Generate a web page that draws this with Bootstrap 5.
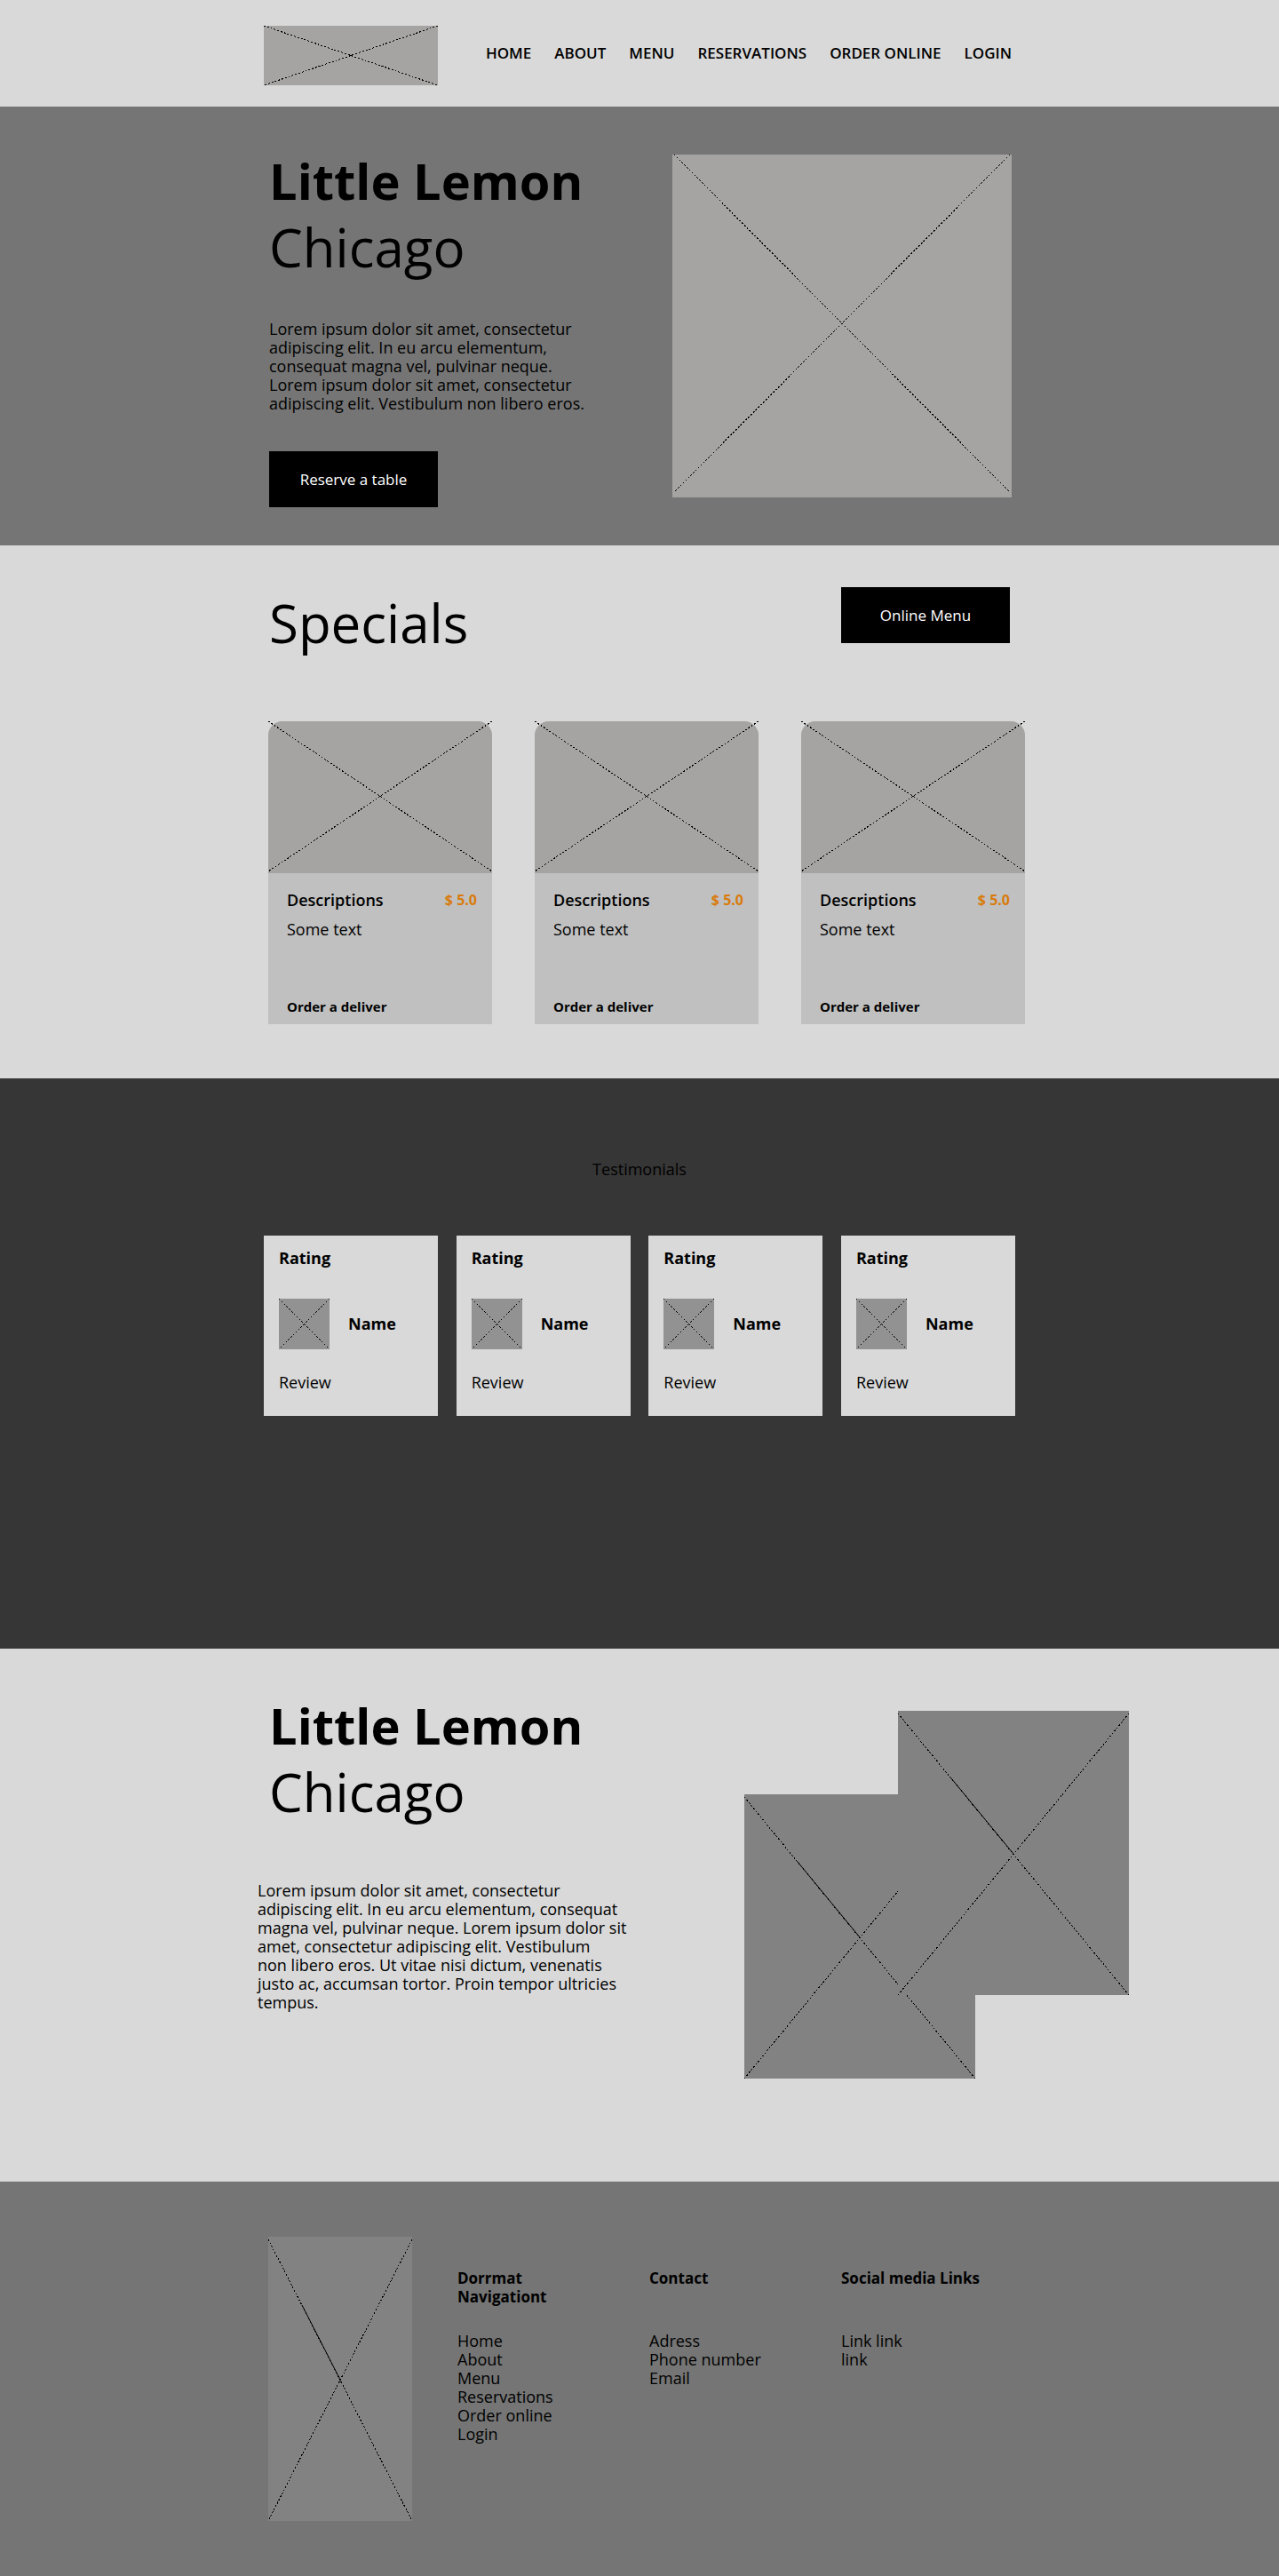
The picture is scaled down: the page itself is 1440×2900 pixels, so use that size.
<!DOCTYPE html>
<html lang="en">
<head>
<meta charset="utf-8">
<meta name="viewport" content="width=device-width, initial-scale=1">
<title>Little Lemon</title>
<link href="https://cdn.jsdelivr.net/npm/bootstrap@5.3.0/dist/css/bootstrap.min.css" rel="stylesheet">
<style>
  body { font-family: "Open Sans", "Noto Sans", sans-serif; font-size: 18px; line-height: 21px; color: #000; background: #757575; }
  a { color: #000; text-decoration: none; }
  a:hover { text-decoration: underline; }
  h1, h2, h3, p, ul { margin: 0; }
  .wrap { max-width: 846px; margin: 0 auto; }
  .band-light { background: #d9d9d9; }
  .band-mid { background: #757575; }
  .band-dark { background: #363636; }

  /* picture placeholders */
  .ph { display: block; width: 100%; overflow: visible; }
  .ph line { stroke: #000; stroke-width: 1; stroke-dasharray: 2 2; shape-rendering: crispEdges; }
  .ph .ph-solid { stroke-dasharray: none; shape-rendering: auto; }
  .ph-warm { background: #a5a4a2; }
  .ph-gray { background: #828282; }
  .ph-thumb { background: #929292; width: 57px; height: 57px; }

  .site-head { padding: 29px 0 24px; }
  .logo-box { width: 196px; }
  .main-nav { column-gap: 26px; padding: 20px 4px 0 0; font-size: 17px; font-weight: 600; }

  .display-title { font-size: 56px; line-height: 75px; font-weight: 700; }
  .display-sub { font-size: 60px; line-height: 75px; font-weight: 400; }
  .btn-block { width: 190px; height: 63px; background: #000; color: #fff; border: 0; font-size: 17px; }
  .btn-block:hover { background: #222; color: #fff; }

  .hero { padding: 46px 0 43px; }
  .hero-copy { padding-left: 6px; }
  .hero-copy p { margin: 44px 0 43px; }
  .hero-pic { width: 382px; margin: 8px 4px 0 0; }

  .specials { padding: 47px 0 61px; }
  .specials-head { padding: 0 6px; margin-bottom: 73px; }
  .specials-head h2 { padding-top: 3px; }
  .dish-row { gap: 48px; margin: 0 -11px 0 5px; }
  .dish { width: 252px; background: #c0c0c0; border-radius: 16px 16px 0 0; }
  .dish .ph { border-radius: 16px 16px 0 0; }
  .dish-body { padding: 20px 17px 9px 21px; height: 170px; }
  .dish-body p { margin-top: 12px; }
  .dish-price { color: #d87b0c; font-weight: 700; font-size: 16px; }
  .dish-name { font-size: 18px; line-height: 21px; font-weight: 600; }
  .dish-link { font-size: 15px; font-weight: 700; }

  .testimonials { padding: 92px 0 262px; }
  .testimonials h2 { font-size: 18px; line-height: 21px; font-weight: 400; margin-bottom: 64px; }
  .quote { width: 196px; height: 203px; background: #d9d9d9; padding: 15px 17px; }
  .quote h3 { font-size: 18px; line-height: 21px; font-weight: 700; }
  .quote-who { gap: 21px; margin: 35px 0 27px; }

  .about { padding: 49px 0 116px; }
  .about-wrap { max-width: 1102px; margin: 0 auto; padding-left: 121px; }
  .about-copy h2, .about-copy .display-sub { padding-left: 13px; }
  .about-copy p { margin-top: 63px; }
  .about-pics { width: 433px; height: 414px; margin-top: 21px; position: relative; }
  .about-pics .ph { position: absolute; width: 260px; }
  .pic-back { left: 0; bottom: 0; }
  .pic-front { right: 0; top: 0; }

  .site-foot { padding: 62px 0; }
  .foot-pic { width: 162px; margin: 0 51px 0 5px; }
  .foot-col { width: 216px; padding-top: 36px; }
  .foot-col:last-child { width: 196px; }
  .foot-col h3 { font-size: 17px; line-height: 21px; font-weight: 700; min-height: 42px; margin-bottom: 29px; }
</style>
</head>
<body>
<header class="band-light">
  <div class="wrap site-head d-flex flex-wrap align-items-start justify-content-between">
    <a href="#" class="logo-box" aria-label="Little Lemon home"><svg class="ph ph-warm" viewBox="0 0 196 67"><line x2="196" y2="67"/><line x1="196" x2="0" y2="67"/></svg></a>
    <nav class="main-nav d-flex flex-wrap">
      <a href="#">HOME</a><a href="#">ABOUT</a><a href="#">MENU</a><a href="#">RESERVATIONS</a><a href="#">ORDER ONLINE</a><a href="#">LOGIN</a>
    </nav>
  </div>
</header>
<main>
  <section class="band-mid hero">
    <div class="wrap d-flex flex-wrap justify-content-between align-items-start">
      <div class="hero-copy">
        <h1 class="display-title">Little Lemon</h1>
        <div class="display-sub">Chicago</div>
        <p>Lorem ipsum dolor sit amet, consectetur<br>adipiscing elit. In eu arcu elementum,<br>consequat magna vel, pulvinar neque.<br>Lorem ipsum dolor sit amet, consectetur<br>adipiscing elit. Vestibulum non libero eros.</p>
        <button type="button" class="btn btn-block rounded-0">Reserve a table</button>
      </div>
      <div class="hero-pic"><svg class="ph ph-warm" viewBox="0 0 382 386"><line x1="2" y1="0" x2="380" y2="380"/><line x1="380" y1="0" x2="2" y2="380"/></svg></div>
    </div>
  </section>

  <section class="band-light specials">
    <div class="wrap">
      <div class="specials-head d-flex flex-wrap justify-content-between align-items-start">
        <h2 class="display-sub">Specials</h2>
        <button type="button" class="btn btn-block rounded-0">Online Menu</button>
      </div>
      <div class="dish-row d-flex flex-wrap">
        <article class="dish">
          <svg class="ph ph-warm" viewBox="0 0 252 171"><line x2="252" y2="169"/><line x1="252" x2="0" y2="169"/></svg>
          <div class="dish-body d-flex flex-column">
            <div class="d-flex justify-content-between align-items-end"><h3 class="dish-name">Descriptions</h3><span class="dish-price">$ 5.0</span></div>
            <p>Some text</p>
            <a href="#" class="dish-link mt-auto">Order a deliver</a>
          </div>
        </article>
        <article class="dish">
          <svg class="ph ph-warm" viewBox="0 0 252 171"><line x2="252" y2="169"/><line x1="252" x2="0" y2="169"/></svg>
          <div class="dish-body d-flex flex-column">
            <div class="d-flex justify-content-between align-items-end"><h3 class="dish-name">Descriptions</h3><span class="dish-price">$ 5.0</span></div>
            <p>Some text</p>
            <a href="#" class="dish-link mt-auto">Order a deliver</a>
          </div>
        </article>
        <article class="dish">
          <svg class="ph ph-warm" viewBox="0 0 252 171"><line x2="252" y2="169"/><line x1="252" x2="0" y2="169"/></svg>
          <div class="dish-body d-flex flex-column">
            <div class="d-flex justify-content-between align-items-end"><h3 class="dish-name">Descriptions</h3><span class="dish-price">$ 5.0</span></div>
            <p>Some text</p>
            <a href="#" class="dish-link mt-auto">Order a deliver</a>
          </div>
        </article>
      </div>
    </div>
  </section>

  <section class="band-dark testimonials">
    <div class="wrap">
      <h2 class="text-center">Testimonials</h2>
      <div class="d-flex flex-wrap justify-content-between">
        <article class="quote"><h3>Rating</h3><div class="d-flex align-items-center quote-who"><svg class="ph ph-thumb" viewBox="0 0 57 57"><line x2="57" y2="57"/><line x1="57" x2="0" y2="57"/></svg><strong>Name</strong></div><p>Review</p></article>
        <article class="quote"><h3>Rating</h3><div class="d-flex align-items-center quote-who"><svg class="ph ph-thumb" viewBox="0 0 57 57"><line x2="57" y2="57"/><line x1="57" x2="0" y2="57"/></svg><strong>Name</strong></div><p>Review</p></article>
        <article class="quote"><h3>Rating</h3><div class="d-flex align-items-center quote-who"><svg class="ph ph-thumb" viewBox="0 0 57 57"><line x2="57" y2="57"/><line x1="57" x2="0" y2="57"/></svg><strong>Name</strong></div><p>Review</p></article>
        <article class="quote"><h3>Rating</h3><div class="d-flex align-items-center quote-who"><svg class="ph ph-thumb" viewBox="0 0 57 57"><line x2="57" y2="57"/><line x1="57" x2="0" y2="57"/></svg><strong>Name</strong></div><p>Review</p></article>
      </div>
    </div>
  </section>

  <section class="band-light about">
    <div class="about-wrap d-flex flex-wrap justify-content-between align-items-start">
      <div class="about-copy">
        <h2 class="display-title">Little Lemon</h2>
        <div class="display-sub">Chicago</div>
        <p>Lorem ipsum dolor sit amet, consectetur<br>adipiscing elit. In eu arcu elementum, consequat<br>magna vel, pulvinar neque. Lorem ipsum dolor sit<br>amet, consectetur adipiscing elit. Vestibulum<br>non libero eros. Ut vitae nisi dictum, venenatis<br>justo ac, accumsan tortor. Proin tempor ultricies<br>tempus.</p>
      </div>
      <div class="about-pics">
        <svg class="ph ph-gray pic-back" viewBox="0 0 260 320"><line y1="3" x2="260" y2="320"/><line x1="260" y1="3" x2="0" y2="320"/><line class="ph-solid" x1="60" y1="76" x2="130" y2="161"/></svg>
        <svg class="ph ph-gray pic-front" viewBox="0 0 260 320"><line y1="3" x2="260" y2="320"/><line x1="260" y1="3" x2="0" y2="320"/><line class="ph-solid" x1="60" y1="76" x2="130" y2="161"/></svg>
      </div>
    </div>
  </section>
</main>
<footer class="band-mid site-foot">
  <div class="wrap d-flex flex-wrap">
    <div class="foot-pic"><svg class="ph ph-gray" viewBox="0 0 162 320"><line y1="3" x2="162" y2="320"/><line x1="162" y1="3" x2="0" y2="320"/><line class="ph-solid" x1="38" y1="77" x2="81" y2="161"/></svg></div>
    <div class="foot-col">
      <h3>Dorrmat<br>Navigationt</h3>
      <ul class="list-unstyled">
        <li><a href="#">Home</a></li><li><a href="#">About</a></li><li><a href="#">Menu</a></li><li><a href="#">Reservations</a></li><li><a href="#">Order online</a></li><li><a href="#">Login</a></li>
      </ul>
    </div>
    <div class="foot-col">
      <h3>Contact</h3>
      <ul class="list-unstyled"><li>Adress</li><li>Phone number</li><li>Email</li></ul>
    </div>
    <div class="foot-col">
      <h3>Social media Links</h3>
      <ul class="list-unstyled"><li><a href="#">Link link</a></li><li><a href="#">link</a></li></ul>
    </div>
  </div>
</footer>
<script src="https://cdn.jsdelivr.net/npm/bootstrap@5.3.0/dist/js/bootstrap.bundle.min.js"></script>
</body>
</html>
